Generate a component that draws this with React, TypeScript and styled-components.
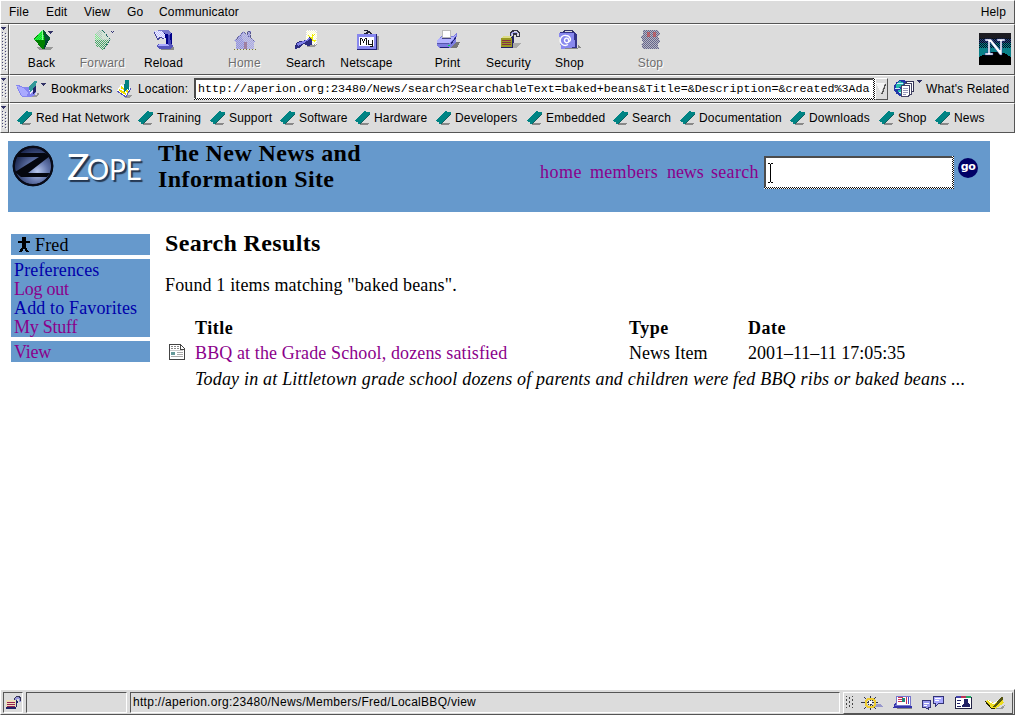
import React from "react";
import styled, { createGlobalStyle, css } from "styled-components";

const face = "#dcdcdc";
const dark = "#555555";
const blue = "#6699cc";

const GlobalStyle = createGlobalStyle`
  * { box-sizing: border-box; }
  body { margin: 0; background: #fff; overflow: hidden; }
  svg { display: block; flex: none; }
`;

const Window = styled.div`
  width: 1015px;
  height: 715px;
  display: flex;
  flex-direction: column;
  background: #fff;
  color: #000;
  font: 12px/14px "Liberation Sans", Arial, sans-serif;
  letter-spacing: 0.16px;
  white-space: nowrap;
`;

const bar = css`
  flex: none;
  display: flex;
  background: ${face};
  border: 1px solid #fff;
  border-right-color: ${dark};
  border-bottom-color: ${dark};
`;

const MenuBar = styled.div`
  ${bar}
  height: 24px;
  padding: 4px 8px 0 8px;
`;
const MenuItem = styled.span<{ $w?: number }>`
  width: ${(p) => (p.$w ? p.$w + "px" : "auto")};
  &:last-child { margin-left: auto; }
`;

const BarRow = styled.div<{ $h: number }>`
  flex: none;
  display: flex;
  height: ${(p) => p.$h}px;
`;
const HandleBox = styled.div`
  ${bar}
  width: 9px;
`;
const Panel = styled.div`
  ${bar}
  flex: 1;
  align-items: center;
`;

const Tools = styled(Panel)`
  align-items: stretch;
  padding-left: 1px;
`;
const Tool = styled.div<{ $off?: boolean; $gap?: boolean }>`
  width: 61px;
  margin-right: ${(p) => (p.$gap ? 20 : 0)}px;
  padding-top: 4px;
  display: flex;
  flex-direction: column;
  align-items: center;
  gap: 5px;
  letter-spacing: 0.2px;
  ${(p) => p.$off && css`color: #6e6e6e; text-shadow: 1px 1px 0 #fff;`}
`;
const Brand = styled.div`
  margin: 8px 3px 0 auto;
`;

const LocLabel = styled.span<{ $w: number }>`
  width: ${(p) => p.$w}px;
`;
const Slot = styled.div<{ $w: number }>`
  width: ${(p) => p.$w}px;
  flex: none;
`;
const checker = css`
  background: repeating-conic-gradient(#111 0 25%, #fff 0 50%) 0 0 / 2px 2px;
`;
const Sunken = styled.div<{ $w: number; $h: number }>`
  flex: none;
  width: ${(p) => p.$w}px;
  height: ${(p) => p.$h}px;
  padding: 0 2px 2px 0;
  ${checker}
`;
const Field = styled.div`
  height: 100%;
  background: #fff;
  border: solid #4c4c4c;
  border-width: 2px 0 0 2px;
  overflow: hidden;
  display: flex;
  align-items: center;
`;
const Url = styled(Field)`
  padding-left: 2px;
  font: 11.67px/14px "Liberation Mono", "Courier New", monospace;
  letter-spacing: 0;
  align-items: flex-start;
  padding-top: 2px;
`;
const Drop = styled.div`
  width: 13px;
  height: 22px;
  margin-right: 6px;
  border: 1px solid #fff;
  border-right-color: ${dark};
  border-bottom-color: ${dark};
  display: flex;
  align-items: center;
`;

const Links = styled(Panel)`
  padding-left: 6px;
`;
const LinkItem = styled.div<{ $w: number }>`
  width: ${(p) => p.$w}px;
  display: flex;
  align-items: center;
  gap: 3px;
`;

const Page = styled.div`
  flex: 1;
  padding: 8px 25px 0 8px;
  font: 18px/19px "Liberation Serif", "Times New Roman", serif;
  letter-spacing: 0.14px;
`;
const Header = styled.header`
  height: 71px;
  background: ${blue};
  display: flex;
  padding-left: 4px;
`;
const Wordmark = styled.div`
  margin-left: 13px;
  width: 91px;
  padding-top: 2px;
  font: 37px/46px Lato, sans-serif;
  letter-spacing: -2.5px;
  color: #fff;
  text-shadow: 2px 2px 1px #24364f;
`;
const Caps = styled.span`
  font-size: 28px;
  letter-spacing: -0.2px;
`;
const SiteTitle = styled.h1`
  margin: -1px 0 0;
  width: 382px;
  font-size: 24px;
  line-height: 26px;
  letter-spacing: 0.4px;
`;
const Nav = styled.nav`
  width: 224px;
  padding-top: 22px;
  display: flex;
  color: #8b008b;
`;
const NavLink = styled.span<{ $w: number; $track: number }>`
  width: ${(p) => p.$w}px;
  letter-spacing: ${(p) => p.$track}px;
`;
const SearchWrap = styled.div`
  padding-top: 15px;
  display: flex;
  gap: 4px;
`;
const Go = styled.div`
  width: 20px;
  height: 20px;
  margin-top: 2px;
  border-radius: 50%;
  background: #000066;
  color: #fff;
  font: bold 11px/18px "DejaVu Sans", sans-serif;
  letter-spacing: -0.5px;
  text-align: center;
`;

const Body = styled.div`
  display: flex;
  padding: 22px 0 0 3px;
`;
const Side = styled.aside`
  width: 139px;
  display: flex;
  flex-direction: column;
  gap: 4px;
`;
const SideBox = styled.div`
  background: ${blue};
  padding: 2px 2px 0 3px;
`;
const User = styled.div`
  display: flex;
  gap: 5px;
  padding-left: 3px;
`;
const SideLink = styled.div<{ $seen?: boolean; $tight?: boolean }>`
  color: ${(p) => (p.$seen ? "#8b008b" : "#0000aa")};
  letter-spacing: ${(p) => (p.$tight ? -0.25 : 0.14)}px;
`;
const Main = styled.main`
  margin-left: 15px;
`;
const Heading = styled.h2`
  margin: -4px 0 0;
  font-size: 24px;
  line-height: 26px;
  letter-spacing: 0.34px;
`;
const Found = styled.p`
  margin: 20px 0 24px;
`;
const Results = styled.div`
  display: grid;
  grid-template-columns: 30px 434px 119px 218px;
  grid-template-rows: 25px 26px 20px;
`;
const Th = styled.div`
  font-weight: bold;
  letter-spacing: 0.5px;
`;
const Td = styled.div<{ $seen?: boolean }>`
  color: ${(p) => (p.$seen ? "#8b008b" : "#000")};
  letter-spacing: ${(p) => (p.$seen ? 0.12 : 0)}px;
`;
const Summary = styled.div`
  grid-column: 2 / -1;
  font-style: italic;
  letter-spacing: 0.19px;
`;

const Status = styled.div`
  ${bar}
  height: 26px;
  padding: 2px 1px 1px 2px;
  gap: 3px;
`;
const Cell = styled.div<{ $w: number }>`
  width: ${(p) => p.$w}px;
  height: 21px;
  border: 1px solid ${dark};
  border-right-color: #fff;
  border-bottom-color: #fff;
  display: flex;
  align-items: center;
  padding: 0 0 2px 2px;
  letter-spacing: 0.29px;
`;
const Tray = styled.div`
  flex: 1;
  height: 22px;
  border: 1px solid #fff;
  border-right-color: ${dark};
  border-bottom-color: ${dark};
  display: flex;
  align-items: center;
`;

const Px = ({ w, h, children }: { w: number; h: number; children: React.ReactNode }) => (
  <svg width={w} height={h} viewBox={`0 0 ${w} ${h}`} shapeRendering="crispEdges">
    {children}
  </svg>
);

const PatternSvg = styled.svg`
  position: absolute;
`;
const patterns = [["dw", "#fff"], ["df", face], ["dn", "#333377"], ["dg", "#008800"], ["dl", "#9999ff"], ["dk", "#4a4a78"], ["db", "#001122"]];
const Patterns = () => (
  <PatternSvg width="0" height="0">
    <defs>
      {patterns.map(([id, c]) => (
        <pattern key={id} id={id} width="2" height="2" patternUnits="userSpaceOnUse">
          <rect width="1" height="1" fill={c} />
          <rect x="1" y="1" width="1" height="1" fill={c} />
        </pattern>
      ))}
    </defs>
  </PatternSvg>
);

const Handle = ({ h }: { h: number }) => (
  <HandleBox>
    <Px w={7} h={h}>
      <path d="M0 2h5v1h-1v1h-1v1h-1v-1h-1v-1h-1z" fill="#333366" />
      {Array.from({ length: Math.floor((h - 8) / 3) }, (_, i) => (
        <React.Fragment key={i}>
          <rect x="1" y={7 + i * 3} width="1" height="1" fill="#444477" />
          <rect x="4" y={8 + i * 3} width="1" height="1" fill="#444477" />
          <rect x="2" y={8 + i * 3} width="1" height="1" fill="#fff" />
          <rect x="5" y={9 + i * 3} width="1" height="1" fill="#fff" />
        </React.Fragment>
      ))}
    </Px>
  </HandleBox>
);

const icons: Record<string, React.ReactNode> = {
  Back: (
    <>
      <path d="M11 18h16l-3 3H13z" fill="#999" />
      <path d="M17 0L8 10l9 11 7-11z" fill="#008000" />
      <path d="M17 0L8 11h10z" fill="#22ff44" />
      <path d="M17 0L8 11h10z" fill="url(#dg)" opacity=".4" />
      <path d="M17 0l7 9-1 2h-4z" fill="#005533" />
      <path d="M19 11h4l-5 10z" fill="#004433" />
      <path d="M16 1h1v10h-1z" fill="#88ff99" />
      <path d="M22 2h5v1h-1v1h-1v1h-1v-1h-1v-1h-1z" fill="#333366" />
    </>
  ),
  Forward: (
    <>
      <path d="M9 3l6-3 9 10-8 11-7-4z" fill="#a9cfb8" />
      <path d="M8 4l6 7H8z" fill="#77ee88" />
      <path d="M8 11h16l-8 10-7-4z" fill="#44aa66" />
      <path d="M15 1l9 9h-9z" fill="#c8e8cc" />
      <path d="M7 0h18v22H7z" fill="url(#df)" />
      <path d="M15.500 1.500l8 9-7 10" fill="none" stroke="#226666" strokeDasharray="1.500 1" />
      <path d="M23 2h5v1h-1v1h-1v1h-1z" fill="url(#dn)" />
    </>
  ),
  Reload: (
    <>
      <path d="M11 18h15v3H13z" fill="#888" />
      <path d="M10 15h13l2 2-2 3H12l-3-2z" fill="#5555bb" />
      <path d="M11 15h9l1 2H10z" fill="#aaaaff" />
      <path d="M12 2h9l3 3v10h-6V9l-4-3z" fill="#000088" />
      <path d="M10 1h10l3 3-2 2-5-2-6-1z" fill="#7777cc" />
      <path d="M20 6h2l1 9h-3z" fill="#4444bb" />
      <path d="M6 2h7l4 3v5l-6-3-1 4z" fill="#eeeeff" />
      <path d="M6 2h7l4 3v5l-6-3-1 4z" fill="url(#dl)" opacity=".5" />
      <path d="M6 3l4 8 2-3 4 2" fill="none" stroke="#444499" />
    </>
  ),
  Home: (
    <>
      <path d="M5 12L14 2l4 4V2h4v7l5 4h-2v7H7v-7z" fill="#9090e0" />
      <path d="M14 2l11 11v7h-9v-6l-3-5z" fill="#a9a9e4" />
      <path d="M5 1h23v20H5z" fill="url(#df)" opacity=".55" />
      <path d="M15 13h3v7h-3z" fill="#a080a0" />
      <path d="M5.500 12.500L14.500 2.500l11 10" fill="none" stroke="#666699" strokeDasharray="1 1" />
      <path d="M18.500 5V2.500h3V9" fill="none" stroke="#555588" strokeDasharray="2 1" />
      <path d="M5 20.500h22" stroke="#77772a" strokeDasharray="1 2" />
    </>
  ),
  Search: (
    <>
      <path d="M8 18h16l3-3-6 1-6 2z" fill="#999" />
      <path d="M17 2l8 0 2 4-2 9-6 1-3-6z" fill="#ffffcc" />
      <path d="M16 1h11v15H16z" fill="url(#dw)" />
      <path d="M18 6l7 7m0-8l-7 7m4-7v6h4" stroke="#eeee00" fill="none" />
      <path d="M5 17l2-4 9-2 3-3 3 2v6l-4 1-4-2-5 4-4 1z" fill="#2b2b80" />
      <path d="M7 14l9-3 3-3 1 2-6 4-6 3z" fill="#7f7fe8" />
    </>
  ),
  Netscape: (
    <>
      <path d="M9 19h17V7h2v14H11z" fill="#999" />
      <path d="M11 5.500h3l2-2h3l2 2h2M13 1.500h3v3h-3M17 2.500h2" stroke="#223" fill="none" />
      <rect x="6" y="5" width="20" height="16" fill="#222277" />
      <rect x="6" y="5" width="19" height="15" fill="#8888ee" />
      <rect x="8" y="8" width="15" height="9" fill="#fff" />
      <path d="M9.500 16V9h1l2 4 2-4h1v7M17.500 11v4h3m1-4v6h-3" fill="none" stroke="#111" />
    </>
  ),
  Print: (
    <>
      <path d="M11 19h14l3-6h-4l-6 5z" fill="#777" />
      <path d="M5 11l5-4h11l4-3-1 9-5 5-1 1H8l-3-2z" fill="#7d7de0" />
      <path d="M5 11l5-3h11l3-2-4 6-3 2H5z" fill="#b4b4ff" />
      <path d="M10.500 1.500h8v7h-8z" fill="#fff" stroke="#bbb" />
      <path d="M19 15l5-7M8 18.500h9" fill="none" stroke="#222277" />
      <path d="M5 14.500h12" stroke="#5555aa" />
      <path d="M10 9h9v1h-9z" fill="#444488" />
      <rect x="16" y="16" width="2" height="1" fill="#00dd55" />
    </>
  ),
  Security: (
    <>
      <path d="M20 14h8l-5 5h-3z" fill="#aaa" />
      <path d="M17.500 9V4.500l3-3h3l3 2v4h-3V5h-3v5" fill="none" stroke="#333344" strokeWidth="1.500" />
      <path d="M18.500 9V5l2-2h3l1 2" fill="none" stroke="#aaaaee" />
      <path d="M8 9l3-2h9l1 2-1 10H8z" fill="#222266" />
      <rect x="8" y="9" width="11" height="9" fill="#999922" />
      <path d="M9 11.500h9M9 13.500h9M9 15.500h9" stroke="#883344" />
      <path d="M8 9l3-2h8l-1 2z" fill="#dddd88" />
    </>
  ),
  Shop: (
    <>
      <path d="M9 19h18l-3-4v5H12z" fill="#888" />
      <path d="M9.500 5V3l2-2h6l2 2v3" fill="none" stroke="#333366" />
      <path d="M6 3h14l3 3v13H7z" fill="#333388" />
      <path d="M5 4h15l1 14-14 2z" fill="#8888ee" />
      <path d="M15 12a2.300 2.300 0 1 1-1-2.500l1 3c3-1 1-6-3-6a5 5 0 1 0 2 9" fill="none" stroke="#fff" strokeWidth="1.400" shapeRendering="auto" />
    </>
  ),
  Stop: (
    <>
      <path d="M8 1h15l2 4-2 3 2 4-2 3 1 5H8l-2-5 2-2-2-5 2-3z" fill="#b5b5c2" />
      <path d="M8 1h15l2 4-2 3 2 4-2 3 1 5H8l-2-5 2-2-2-5 2-3z" fill="url(#dk)" opacity=".75" />
      <path d="M12 3h3v5h-3zM18 3h3v5h-3z" fill="#cc4444" opacity=".6" />
    </>
  ),
};

const tools = [
  ["Back"], ["Forward", "off"], ["Reload", "", "gap"],
  ["Home", "off"], ["Search"], ["Netscape", "", "gap"],
  ["Print"], ["Security"], ["Shop", "", "gap"], ["Stop", "off"],
];

const links: [string, number][] = [
  ["Red Hat Network", 121], ["Training", 72], ["Support", 70], ["Software", 75],
  ["Hardware", 81], ["Developers", 91], ["Embedded", 86], ["Search", 67],
  ["Documentation", 110], ["Downloads", 89], ["Shop", 56], ["News", 60],
];

const Ribbon = () => (
  <Px w={17} h={16}>
    <path d="M5 15h9v-1h1v-1H8z" fill="#888" />
    <path d="M0 11L11 1l1 1h4v2L6 13l-1 2-1-3z" fill="#008484" />
    <path d="M15.500 4.500L5.500 14.500" stroke="#116060" fill="none" />
  </Px>
);

const NetscapeN = () => (
  <svg width="32" height="32" viewBox="0 0 32 32" shapeRendering="crispEdges">
    <rect width="32" height="32" fill="#1c1c22" />
    <path d="M0 6h32v4H0z" fill="#2c3d78" />
    <path d="M0 10h32v14H0z" fill="#0a8088" />
    <path d="M0 5h32v10H0z" fill="url(#db)" />
    <path d="M0 24L7 21 13 19h8l6 2 5 3v8H0z" fill="#000" />
    <path d="M6 6h6l9 11V8h-3V6h8v2h-3v14h-2L11 9v11h3v2H6v-2h3V8H6z" fill="#fff" stroke="#223388" strokeWidth=".5" shapeRendering="auto" />
  </svg>
);

const BookmarkIcon = () => (
  <Px w={32} h={20}>
    <path d="M4 16h17l1-3 1 2-3 3H7z" fill="#999" />
    <path d="M0 6h3l4 2h5l4 3 4 2-2 4-4 1H6l-3-5z" fill="#8585f0" />
    <path d="M1 7l6 2 5 4-1 4H6z" fill="#aaaaff" />
    <path d="M13 8l7-6v8l-6 5z" fill="#e8e8ff" />
    <path d="M13 8l5-6h3l-2 8-5 3z" fill="#339999" />
    <path d="M17 9l3-2v6l-3 2z" fill="#222266" />
    <path d="M25 4h5v1h-1v1h-1v1h-1V6h-1V5h-1z" fill="#333366" />
  </Px>
);

const LocationIcon = () => (
  <Px w={16} h={18}>
    <path d="M6 15h10l-4 3H8z" fill="#999" />
    <path d="M0 11l4-7 10 4-5 9z" fill="#fff" />
    <path d="M0 11l9 6 5-9" fill="none" stroke="#5555bb" />
    <path d="M2 10l7 4M4 7l7 5" stroke="#eedd00" strokeWidth="2" />
    <path d="M8 0h4v10l-2-1-3 4V8z" fill="#008080" />
  </Px>
);

const RelatedIcon = () => (
  <Px w={32} h={20}>
    <circle cx="8" cy="9" r="8" fill="#2238a8" />
    <path d="M2 5l4-3 4 2-3 4-5 1zM3 12l4-2 2 5H6z" fill="#22bbaa" />
    <path d="M1 9.500h5M3 4.500h6M5 13.500h4" stroke="#cfe8ff" />
    <path d="M12.500 2.500h7v10h-7z" fill="#fff" stroke="#335" />
    <path d="M10.500 4.500h7v11h-7z" fill="#fff" stroke="#446" />
    <path d="M7.500 6.500h8v10l-2 1h-6z" fill="#fff" stroke="#446" />
    <path d="M9 9.500h5M9 11.500h5M9 13.500h5M9 15.500h3" stroke="#9999bb" />
    <path d="M23 1h5v1h-1v1h-1v1h-1V3h-1V2h-1z" fill="#333366" />
  </Px>
);

const Globe = () => (
  <svg width="42" height="48" viewBox="0 0 42 48">
    <defs>
      <radialGradient id="ball" cx=".62" cy=".65" r=".65">
        <stop offset="0" stopColor="#b8c8ee" />
        <stop offset=".45" stopColor="#6275aa" />
        <stop offset="1" stopColor="#1e2b55" />
      </radialGradient>
    </defs>
    <circle cx="21" cy="25" r="20.3" fill="#0a0d1c" />
    <circle cx="21" cy="25" r="18.3" fill="url(#ball)" />
    <path d="M6 12h27l5 3-22 17h22l-3 4H9l-6-5 24-15H5z" fill="#05070f" />
    <circle cx="21" cy="25" r="19.200" fill="none" stroke="#080b18" strokeWidth="2.200" />
  </svg>
);

const Lock = () => (
  <Px w={16} h={16}>
    <path d="M8 8V4l2-2h4l1 2v4h-2V5h-2v3z" fill="#9999dd" />
    <path d="M8.500 7V4.500l2-2h3l1 2V7" fill="none" stroke="#335" />
    <path d="M0 6h10l2 1-2 8H0z" fill="#222266" />
    <rect x="0" y="6" width="10" height="7" fill="#eee0b8" />
    <path d="M1 8.500h8M1 10.500h8M1 12.500h8" stroke="#992255" />
  </Px>
);

const TrayIcons = () => (
  <Px w={166} h={18}>
    {Array.from({ length: 18 }, (_, i) => (
      <rect key={i} x={2 + (i % 3) * 3} y={2 + Math.floor(i / 3) * 2 + (i % 2)} width="1" height="1" fill="#444" />
    ))}
    <path d="M27 13h12l-2-3h-7z" fill="#9999cc" />
    <path d="M26.500 2v14M17 8.500h17M20 3l12 12M32 3L20 15" stroke="#333344" fill="none" />
    <path d="M24 5h5l2 2v4l-2 2h-5l-2-2V7z" fill="none" stroke="#eecc33" strokeWidth="2" />
    <rect x="25" y="7" width="3" height="3" fill="#fff" />
    <path d="M51 14h17l2-2-3 3H54z" fill="#888" />
    <path d="M51 9h16l1 5H49z" fill="#3333aa" />
    <path d="M53 2h13v9H52z" fill="#fff" stroke="#7777cc" />
    <path d="M54 3.500h5M54 5.500h4M54 7.500h4M62.500 3v7" stroke="#cc3355" fill="none" />
    <path d="M64.500 3v7" stroke="#4444cc" />
    <path d="M58 4h3v4h-3z" fill="#228877" />
    <path d="M78.500 6.500h8v7h-2v2l-3-2h-3z" fill="#9999ee" stroke="#333377" />
    <path d="M89.500 2.500h10v7h-5l-3 3v-3h-2z" fill="#aaaaff" stroke="#333377" />
    <path d="M80 9.500h5M80 11.500h3M91 4.500h6M91 6.500h4" stroke="#fff" />
    <path d="M111.500 3.500h16v11h-16z" fill="#fff" stroke="#222244" />
    <path d="M112 2h5v2h-5z" fill="#4444aa" />
    <path d="M117 2h5v2h-5z" fill="#bb3355" />
    <path d="M122 2h5v2h-5z" fill="#22aa66" />
    <path d="M120 5h4v5h-4zM118 13v-2l3-2h3l2 2v2zM113 6h4v1h-4zM113 9h3v1h-3zM113 12h4v1h-4z" fill="#222266" />
    <path d="M146 15h13l2-4-5 3z" fill="#999" />
    <path d="M141 7l4-1 5 3 5-3h4l1 3-9 6-5-1z" fill="#eedd22" />
    <path d="M144 6l5 4 6-4" stroke="#fff" fill="none" />
    <path d="M149 13l8-10h2v2l-7 8z" fill="#555511" />
    <path d="M141 7l6 7h4" stroke="#222200" fill="none" />
  </Px>
);

export default function App() {
  return (
    <Window>
      <GlobalStyle />
      <Patterns />
      <MenuBar>
        <MenuItem $w={37}>File</MenuItem>
        <MenuItem $w={38}>Edit</MenuItem>
        <MenuItem $w={43}>View</MenuItem>
        <MenuItem $w={32}>Go</MenuItem>
        <MenuItem $w={90}>Communicator</MenuItem>
        <MenuItem>Help</MenuItem>
      </MenuBar>

      <BarRow $h={51}>
        <Handle h={48} />
        <Tools>
          {tools.map(([name, off, gap]) => (
            <Tool key={name} $off={off === "off" || undefined} $gap={!!gap}>
              <Px w={32} h={22}>{icons[name]}</Px>
              {name}
            </Tool>
          ))}
          <Brand><NetscapeN /></Brand>
        </Tools>
      </BarRow>

      <BarRow $h={28}>
        <Handle h={25} />
        <Panel>
          <Slot $w={6} />
          <Slot $w={35}><BookmarkIcon /></Slot>
          <LocLabel $w={66}>Bookmarks</LocLabel>
          <Slot $w={21}><LocationIcon /></Slot>
          <LocLabel $w={56}>Location:</LocLabel>
          <Sunken $w={681} $h={22}>
            <Url>http://aperion.org:23480/News/search?SearchableText=baked+beans&amp;Title=&amp;Description=&amp;created%3Ada</Url>
          </Sunken>
          <Drop>
            <Px w={11} h={14}>
              <path d="M1 2h9L6 13z" fill="#c4c4c4" />
              <path d="M0 1h9L5 11z" fill="#fff" opacity=".8" />
              <path d="M9.500 2L6 12" stroke="#555" strokeWidth="1.300" />
            </Px>
          </Drop>
          <Slot $w={32}><RelatedIcon /></Slot>
          <span>What's Related</span>
        </Panel>
      </BarRow>

      <BarRow $h={30}>
        <Handle h={27} />
        <Links>
          {links.map(([name, w]) => (
            <LinkItem key={name} $w={w}>
              <Ribbon />
              {name}
            </LinkItem>
          ))}
        </Links>
      </BarRow>

      <Page>
        <Header>
          <Globe />
          <Wordmark>Z<Caps>OPE</Caps></Wordmark>
          <SiteTitle>The New News and<br />Information Site</SiteTitle>
          <Nav>
            <NavLink $w={50} $track={0.5}>home</NavLink>
            <NavLink $w={77} $track={0.3}>members</NavLink>
            <NavLink $w={44} $track={-0.1}>news</NavLink>
            <NavLink $w={50} $track={0.3}>search</NavLink>
          </Nav>
          <SearchWrap>
            <Sunken $w={190} $h={33}>
              <Field>
                <Px w={12} h={20}>
                  <path d="M2 .5h2m1 0h2M4.500 1v18M2 19.500h2m1 0h2" stroke="#000" />
                </Px>
              </Field>
            </Sunken>
            <Go>go</Go>
          </SearchWrap>
        </Header>

        <Body>
          <Side>
            <SideBox>
              <User>
                <Px w={13} h={19}>
                  <path d="M5 1h4v4H5zM1 5h12v2H9v4l3 5H9l-2-4-2 4H2l3-5V7H1z" fill="#000" />
                </Px>
                Fred
              </User>
            </SideBox>
            <SideBox>
              <SideLink>Preferences</SideLink>
              <SideLink $seen $tight>Log out</SideLink>
              <SideLink>Add to Favorites</SideLink>
              <SideLink $seen $tight>My Stuff</SideLink>
            </SideBox>
            <SideBox><SideLink $seen $tight>View</SideLink></SideBox>
          </Side>
          <Main>
            <Heading>Search Results</Heading>
            <Found>Found 1 items matching "baked beans".</Found>
            <Results>
              <span />
              <Th>Title</Th>
              <Th>Type</Th>
              <Th>Date</Th>
              <Px w={22} h={18}>
                <path d="M4.500 .5h11l4 4v11h-15z" fill="#fff" stroke="#444" />
                <path d="M15.500 1v4h4" fill="none" stroke="#444" />
                <path d="M6 2.500h8M6 4.500h8" stroke="#888" strokeDasharray="2 1" />
                <path d="M5 6.500h13" stroke="#ccc" />
                <path d="M6 8h4v3H6z" fill="#669999" />
                <path d="M12 8.500h6M12 10.500h6M6 12.500h12" stroke="#aaa" />
              </Px>
              <Td $seen>BBQ at the Grade School, dozens satisfied</Td>
              <Td>News Item</Td>
              <Td>2001–11–11 17:05:35</Td>
              <Summary>Today in at Littletown grade school dozens of parents and children were fed BBQ ribs or baked beans ...</Summary>
            </Results>
          </Main>
        </Body>
      </Page>

      <Status>
        <Cell $w={20}><Lock /></Cell>
        <Cell $w={101}> </Cell>
        <Cell $w={710}>http://aperion.org:23480/News/Members/Fred/LocalBBQ/view</Cell>
        <Tray><TrayIcons /></Tray>
      </Status>
    </Window>
  );
}
